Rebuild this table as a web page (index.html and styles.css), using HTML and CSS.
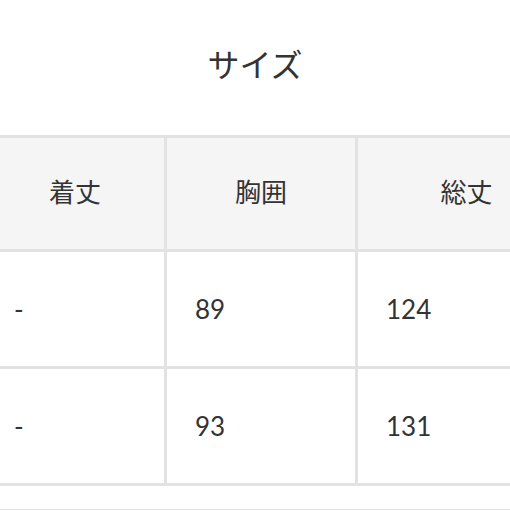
FILE: index.html
```html
<!DOCTYPE html>
<html lang="ja">
<head>
<meta charset="utf-8">
<link rel="stylesheet" href="styles.css">
</head>
<body>
<div class="page">
  <h2 class="title">サイズ</h2>
  <table class="size-table">
    <colgroup>
      <col class="c1"><col class="c2"><col class="c3">
    </colgroup>
    <thead>
      <tr><th>着丈</th><th>胸囲</th><th>総丈</th></tr>
    </thead>
    <tbody>
      <tr><td>-</td><td>89</td><td>124</td></tr>
      <tr><td>-</td><td>93</td><td>131</td></tr>
    </tbody>
  </table>
  <div class="rule"></div>
</div>
</body>
</html>
```
FILE: styles.css
```css
html, body {
  margin: 0;
  padding: 0;
  background: #fff;
}
body {
  overflow: hidden;
  font-family: "Lato", "Noto Sans CJK JP", sans-serif;
  color: #333;
}
.page {
  width: 510px;
  height: 510px;
  overflow: hidden;
}
.title {
  margin: 0;
  padding-top: 39px;
  height: 96px;
  box-sizing: border-box;
  text-align: center;
  font-family: "Noto Sans CJK JP", sans-serif;
  font-weight: 400;
  font-size: 32px;
  line-height: 48px;
  color: #333;
}
.size-table {
  border-collapse: collapse;
  margin-left: -17px;
  margin-top: 39px;
  table-layout: fixed;
  width: 592px;
}
.c1 { width: 181px; }
.c2 { width: 191px; }
.c3 { width: 220px; }
.size-table th,
.size-table td {
  border: 3px solid #e2e2e2;
  font-size: 26px;
  font-weight: 400;
  color: #333;
}
.size-table th {
  background: #f5f5f5;
  height: 105px;
  text-align: center;
  font-family: "Noto Sans CJK JP", sans-serif;
  padding: 0 0 6px 0;
}
.size-table td {
  height: 114px;
  text-align: left;
  padding: 0 0 0 28px;
  font-family: "Lato", "Noto Sans CJK JP", sans-serif;
}
.rule {
  margin-top: 23px;
  border-top: 3px solid #e2e2e2;
}
```
